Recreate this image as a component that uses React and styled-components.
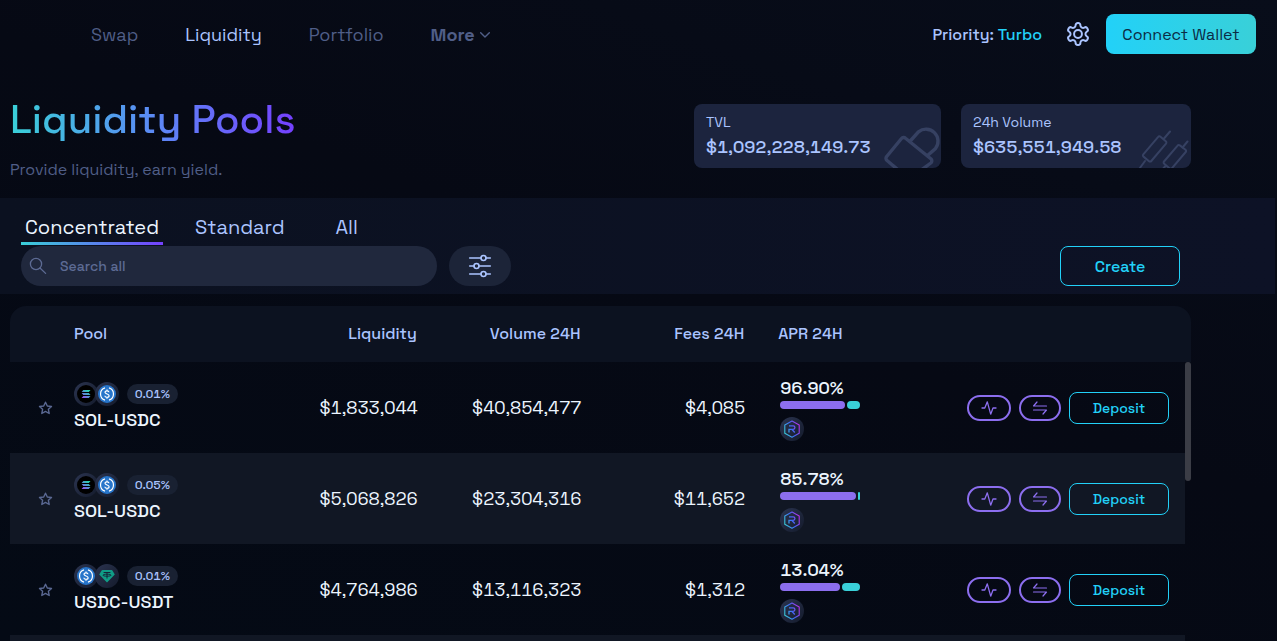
import React, { useState } from 'react';
import styled, { createGlobalStyle } from 'styled-components';

const GlobalStyle = createGlobalStyle`
  * {
    box-sizing: border-box;
  }
  body {
    margin: 0;
    background: #060914;
    color: #ecf5ff;
    font-family: 'Space Grotesk', Inter, 'Liberation Sans', sans-serif;
    font-variant-numeric: tabular-nums;
  }
  button,
  input {
    font-family: inherit;
    font-weight: inherit;
  }
`;

const Page = styled.div`
  height: 100vh;
  display: flex;
  flex-direction: column;
  overflow: hidden;
  background: linear-gradient(200deg, #080d1a 0%, #060914 45%, #040a15 100%);
`;

const Header = styled.header`
  display: flex;
  align-items: center;
  justify-content: space-between;
  height: 68px;
  flex-shrink: 0;
  padding: 0 21px 0 91px;
`;

const Nav = styled.nav`
  display: flex;
  align-items: center;
  gap: 47px;
  padding-top: 2px;
`;

const NavLink = styled.a`
  color: ${(props) => (props.$active ? '#abc4ff' : '#505e87')};
  font-size: 18px;
  line-height: 24px;
  text-decoration: none;
`;

const MoreButton = styled.button`
  display: flex;
  align-items: center;
  gap: 5px;
  padding: 0;
  border: 0;
  background: none;
  color: #505e87;
  font-size: 18px;
  font-weight: 600;
  line-height: 24px;
`;

const HeaderRight = styled.div`
  display: flex;
  align-items: center;
`;

const Priority = styled.span`
  color: #abc4ff;
  font-size: 16px;
  font-weight: 500;
  margin-right: 24px;

  em {
    color: #22d1f8;
    font-style: normal;
  }
`;

const IconButton = styled.button`
  display: flex;
  padding: 0;
  border: 0;
  background: none;
  color: #abc4ff;
  margin-right: 16px;
`;

const ConnectButton = styled.button`
  width: 150px;
  height: 40px;
  border: 0;
  border-radius: 8px;
  background: linear-gradient(90deg, #22d1f8, #39d0d8);
  color: #0b2b44;
  font-size: 16px;
`;

const Hero = styled.section`
  display: flex;
  justify-content: space-between;
  align-items: flex-start;
  height: 130px;
  flex-shrink: 0;
  padding: 28px 86px 0 10px;
`;

const Title = styled.h1`
  width: fit-content;
  margin: 0 0 14px;
  background: linear-gradient(90deg, #39d0d8, #5b8af5 50%, #7540ff);
  background-clip: text;
  color: transparent;
  font-size: 40px;
  font-weight: 500;
  line-height: 48px;
`;

const Subtitle = styled.p`
  margin: 0;
  color: #505e87;
  font-size: 16px;
  line-height: 24px;
`;

const Stats = styled.div`
  display: flex;
  gap: 20px;
  padding-top: 8px;
`;

const StatCard = styled.div`
  position: relative;
  width: ${(props) => props.$width};
  height: 64px;
  padding: 8px 12px;
  border-radius: 8px;
  background: #1c243e;
  overflow: hidden;
  color: #abc4ff;

  svg {
    position: absolute;
    right: 0;
    bottom: 0;
    color: #364162;
  }
`;

const StatLabel = styled.div`
  font-size: 14px;
  line-height: 20px;
`;

const StatValue = styled.div`
  font-size: 18px;
  font-weight: 500;
  line-height: 30px;
`;

const Toolbar = styled.section`
  flex-shrink: 0;
  margin-right: 2px;
  padding: 13px 95px 8px 21px;
  background: linear-gradient(90deg, #0b1120, #0d1226);
`;

const Tabs = styled.div`
  display: flex;
  gap: 28px;
`;

const Tab = styled.button`
  min-width: 60px;
  padding: 2px 4px 0;
  border: 0;
  border-bottom: 3px solid;
  border-image: ${(props) =>
      props.$active
        ? 'linear-gradient(90deg, #39d0d8, #7540ff)'
        : 'linear-gradient(transparent, transparent)'}
    1;
  background: none;
  color: ${(props) => (props.$active ? '#ecf5ff' : '#abc4ff')};
  font-size: 20px;
  line-height: 29px;
`;

const ToolRow = styled.div`
  display: flex;
  align-items: center;
  gap: 12px;
  padding-top: 1px;
`;

const SearchBox = styled.label`
  display: flex;
  align-items: center;
  gap: 11px;
  width: 416px;
  height: 40px;
  padding: 0 8px;
  border-radius: 20px;
  background: #20283d;
  color: #5d6b94;

  input {
    flex: 1;
    border: 0;
    outline: 0;
    background: none;
    color: #abc4ff;
    font-size: 14px;
    font-weight: 500;
  }
  input::placeholder {
    color: #5d6b94;
    opacity: 1;
  }
`;

const FilterButton = styled.button`
  display: flex;
  align-items: center;
  justify-content: center;
  width: 62px;
  height: 40px;
  padding: 0;
  border: 0;
  border-radius: 20px;
  background: #1c2438;
  color: #abc4ff;
`;

const OutlineButton = styled.button`
  width: ${(props) => (props.$large ? 120 : 100)}px;
  height: ${(props) => (props.$large ? 40 : 32)}px;
  margin-left: ${(props) => (props.$large ? 'auto' : 0)};
  padding: 0;
  border: 1px solid #22d1f8;
  border-radius: 8px;
  background: none;
  color: #22d1f8;
  font-size: ${(props) => (props.$large ? 16 : 14)}px;
  font-weight: 500;
`;

const TableWrap = styled.div`
  position: relative;
  flex: 1;
  min-height: 0;
  margin: 12px 86px 0 10px;
  border-radius: 16px 16px 0 0;
  overflow: hidden;
`;

const Table = styled.table`
  display: flex;
  flex-direction: column;
  height: 100%;
`;

const Thead = styled.thead`
  display: block;
  padding-right: 6px;
  background: #0c1220;
`;

const Tbody = styled.tbody`
  display: block;
  flex: 1;
  min-height: 0;
  margin-right: 6px;
  overflow-y: auto;
  scrollbar-width: none;
`;

const Row = styled.tr`
  display: grid;
  grid-template-columns: 64px 11fr 10fr 10fr 10fr 13fr 227px;
  align-items: center;
  height: ${(props) => (props.$head ? 56 : 91)}px;
  background: ${(props) => (props.$striped ? '#111724' : 'transparent')};
`;

const Th = styled.th`
  padding: 0 1px 2px ${(props) => (props.$inset ? 33 : 0)}px;
  color: #abc4ff;
  font-size: 16px;
  font-weight: 500;
  text-align: ${(props) => (props.$right ? 'right' : 'left')};
`;

const Td = styled.td`
  padding: 0 0 0 ${(props) => (props.$inset ? 35 : 0)}px;
  font-size: 18px;
  line-height: 24px;
  text-align: ${(props) => (props.$right ? 'right' : 'left')};
`;

const StarButton = styled.button`
  display: flex;
  margin-left: 28px;
  padding: 0;
  border: 0;
  background: none;
  color: ${(props) => (props.$on ? '#abc4ff' : '#5a6892')};
`;

const PoolInfo = styled.div`
  padding-bottom: 2px;
`;

const PoolTop = styled.div`
  display: flex;
  align-items: center;
  height: 24px;
`;

const TokenBadge = styled.span`
  display: flex;
  align-items: center;
  justify-content: center;
  width: 24px;
  height: 24px;
  border-radius: 50%;
  background: linear-gradient(130deg, #2b3450, #141b2c);

  & + & {
    margin-left: -3px;
  }
`;

const FeeTag = styled.span`
  margin-left: 8px;
  padding: 0 8px;
  border-radius: 10px;
  background: #192132;
  color: #abc4ff;
  font-size: 12px;
  font-weight: 500;
  line-height: 20px;
`;

const PoolName = styled.div`
  margin-top: 2px;
  font-weight: 500;
`;

const Apr = styled.div`
  padding-top: 2px;
`;

const AprValue = styled.div`
  font-weight: 500;
`;

const AprBar = styled.div`
  display: flex;
  gap: 2px;
  width: 80px;
  height: 8px;
  margin: 1px 0 8px;
`;

const AprPart = styled.span`
  border-radius: 4px;
  background: ${(props) => props.$color};
`;

const Actions = styled.div`
  display: flex;
  align-items: center;
  justify-content: flex-end;
  gap: 8px;
  padding-right: 16px;
`;

const PillButton = styled.button`
  display: flex;
  align-items: center;
  justify-content: center;
  width: ${(props) => props.$width}px;
  height: 26px;
  padding: 0;
  border: 2px solid #8c6eef;
  border-radius: 13px;
  background: none;
  color: #8c6eef;
`;

const ScrollThumb = styled.div`
  position: absolute;
  top: 56px;
  right: 0;
  width: 6px;
  height: 119px;
  border-radius: 3px;
  background: #3b3d46;
`;

const ChevronIcon = () => (
  <svg width="10" height="6" viewBox="0 0 10 6" fill="none" stroke="currentColor" strokeWidth="1.4">
    <path d="M0.7 0.7 5 5 9.3 0.7" strokeLinecap="round" strokeLinejoin="round" />
  </svg>
);

const GearIcon = () => (
  <svg width="24" height="24" viewBox="1 1 22 22" fill="none" stroke="currentColor" strokeWidth="1.8">
    <path
      d="M12.22 2h-.44a2 2 0 0 0-2 2v.18a2 2 0 0 1-1 1.73l-.43.25a2 2 0 0 1-2 0l-.15-.08a2 2 0 0 0-2.73.73l-.22.38a2 2 0 0 0 .73 2.73l.15.1a2 2 0 0 1 1 1.72v.51a2 2 0 0 1-1 1.74l-.15.09a2 2 0 0 0-.73 2.73l.22.38a2 2 0 0 0 2.73.73l.15-.08a2 2 0 0 1 2 0l.43.25a2 2 0 0 1 1 1.73V20a2 2 0 0 0 2 2h.44a2 2 0 0 0 2-2v-.18a2 2 0 0 1 1-1.73l.43-.25a2 2 0 0 1 2 0l.15.08a2 2 0 0 0 2.73-.73l.22-.39a2 2 0 0 0-.73-2.73l-.15-.08a2 2 0 0 1-1-1.74v-.5a2 2 0 0 1 1-1.74l.15-.09a2 2 0 0 0 .73-2.73l-.22-.38a2 2 0 0 0-2.73-.73l-.15.08a2 2 0 0 1-2 0l-.43-.25a2 2 0 0 1-1-1.73V4a2 2 0 0 0-2-2z"
      strokeLinejoin="round"
    />
    <circle cx="12" cy="12" r="3.6" />
  </svg>
);

const LockIcon = () => (
  <svg width="58" height="44" viewBox="0 0 58 44" fill="none" stroke="currentColor" strokeWidth="3.4">
    <path
      d="M18.500 14.500 3.700 32.500a2.800 2.800 0 0 0 .3 4L26 55 47.800 39a2.800 2.800 0 0 0 .3-4L22.500 14.200a2.800 2.800 0 0 0-4 .3z"
      strokeLinejoin="round"
    />
    <path d="M26.800 17.500 35.500 7.800A12 12 0 0 1 52.500 24.500L44 32" />
  </svg>
);

const CandlesIcon = () => (
  <svg width="53" height="40" viewBox="1 0 53 40" fill="none" stroke="currentColor" strokeWidth="2" strokeLinecap="round">
    <path d="M33 3.500 27 10.500M8 33 2.500 40.500M50.500 13.500 45.500 19.500M28.500 38 23 44" />
    <path
      d="M21.200 8.900 6.300 26.300a1.600 1.600 0 0 0 .2 2.300l5.500 4.600a1.600 1.600 0 0 0 2.300-.2L29 15.600a1.600 1.600 0 0 0-.2-2.300l-5.300-4.600a1.600 1.600 0 0 0-2.300.2z"
      strokeLinejoin="round"
    />
    <path
      d="M40.600 17.600 27 33.500a1.600 1.600 0 0 0 .2 2.300l5.500 4.600a1.600 1.600 0 0 0 2.300-.2L48.700 24a1.600 1.600 0 0 0-.2-2.300l-5.600-4.300a1.600 1.600 0 0 0-2.300.2z"
      strokeLinejoin="round"
    />
  </svg>
);

const SearchIcon = () => (
  <svg width="18" height="18" viewBox="0 0 18 18" fill="none" stroke="currentColor" strokeWidth="1.3" strokeLinecap="round">
    <circle cx="7" cy="7" r="5.6" />
    <path d="m11 11 5.6 5.4" />
  </svg>
);

const FilterIcon = () => (
  <svg width="24" height="24" viewBox="0 0 24 24" fill="none" stroke="currentColor" strokeWidth="1.6" strokeLinecap="round">
    <path d="M1.7 4H13M18 4h4.300M1.700 12H6M11 12h11.300M1.700 20H13M18 20h4.300" />
    <circle cx="15.5" cy="4" r="2.5" />
    <circle cx="8.5" cy="12" r="2.5" />
    <circle cx="15.5" cy="20" r="2.5" />
  </svg>
);

const StarIcon = () => (
  <svg width="15" height="14" viewBox="0 0 15 14" fill="none" stroke="currentColor" strokeWidth="1.4">
    <path
      d="m7.500 1.200 1.800 3.800 4.200.5-3.100 2.800.8 4.200-3.700-2.100-3.700 2.100.8-4.200L1.500 5.500 5.700 5z"
      strokeLinejoin="round"
    />
  </svg>
);

const PulseIcon = () => (
  <svg width="16" height="16" viewBox="0 0 16 16" fill="none" stroke="currentColor" strokeWidth="1.3">
    <path d="M1 8h2.800L6.300 1.800 9.700 14.200 12 8h3" strokeLinecap="round" strokeLinejoin="round" />
  </svg>
);

const SwapIcon = () => (
  <svg width="16" height="16" viewBox="0 0 16 16" fill="none" stroke="currentColor" strokeWidth="1.2">
    <path d="M14.500 6H1.500L5 2M1.500 10H14.500L11 14" strokeLinecap="round" strokeLinejoin="round" />
  </svg>
);

const SolIcon = () => (
  <svg width="18" height="18" viewBox="0 0 18 18">
    <defs>
      <linearGradient id="sol" x1="13" y1="4" x2="5" y2="14" gradientUnits="userSpaceOnUse">
        <stop offset="0" stopColor="#19f0a0" />
        <stop offset="0.5" stopColor="#4f96cf" />
        <stop offset="1" stopColor="#a83df5" />
      </linearGradient>
    </defs>
    <circle cx="9" cy="9" r="9" fill="#000" />
    <path
      d="M6.300 4.900h7.200l-1.700 2.200H4.600zM4.600 7.900h7.200l1.700 2.200H6.300zM6.300 10.900h7.200l-1.700 2.200H4.600z"
      fill="url(#sol)"
    />
  </svg>
);

const UsdcIcon = () => (
  <svg width="18" height="18" viewBox="0 0 18 18" fill="none" stroke="#fff" strokeWidth="1.200">
    <circle cx="9" cy="9" r="9" fill="#2775ca" stroke="none" />
    <path d="M7 2.900a6.400 6.400 0 0 0 0 12.200M11 2.900a6.400 6.400 0 0 1 0 12.200" />
    <path d="M11 7.200C10.900 6.200 10.100 5.800 9 5.800c-1.200 0-2 .5-2 1.500 0 2.200 4.100 1.100 4.100 3.400 0 1-.9 1.600-2.100 1.600s-2.100-.5-2.200-1.600M9 4.400v1.400M9 12.300v1.400" />
  </svg>
);

const UsdtIcon = () => (
  <svg width="18" height="18" viewBox="0 0 18 18">
    <path d="M4.400 3h9.200a1 1 0 0 1 .8.500L16.800 7.500 9 15.500 1.200 7.500l2.400-4a1 1 0 0 1 .8-.5z" fill="#109d86" />
    <path
      d="M5.600 5.500h6.800M9 5.500v6M9 9.200c-2.300 0-4-.4-4-1s1.700-1 4-1 4 .4 4 1-1.700 1-4 1z"
      fill="none"
      stroke="#15253a"
      strokeWidth="1"
    />
  </svg>
);

const RayIcon = () => (
  <svg width="18" height="18" viewBox="0 0 18 18" fill="none" stroke="url(#ray)" strokeWidth="1.100">
    <defs>
      <linearGradient id="ray" x1="1" y1="12" x2="17" y2="6" gradientUnits="userSpaceOnUse">
        <stop offset="0" stopColor="#39d0d8" />
        <stop offset="0.500" stopColor="#3f68f5" />
        <stop offset="1" stopColor="#c22ee8" />
      </linearGradient>
    </defs>
    <path d="M9 1 16.200 5v8.200L9 17.200 1.800 13.200V5z" strokeLinejoin="round" />
    <path d="M6 12.500V9.300h4.200a1.700 1.700 0 0 0 0-3.400H6M9 9.500l2.800 3" strokeWidth="1.300" />
  </svg>
);

const tokenIcons = { SOL: SolIcon, USDC: UsdcIcon, USDT: UsdtIcon };

const pools = [
  {
    id: 1,
    tokens: ['SOL', 'USDC'],
    fee: '0.01%',
    liquidity: '$1,833,044',
    volume: '$40,854,477',
    fees: '$4,085',
    apr: '96.90%',
    parts: [65, 13],
  },
  {
    id: 2,
    tokens: ['SOL', 'USDC'],
    fee: '0.05%',
    liquidity: '$5,068,826',
    volume: '$23,304,316',
    fees: '$11,652',
    apr: '85.78%',
    parts: [76, 2],
  },
  {
    id: 3,
    tokens: ['USDC', 'USDT'],
    fee: '0.01%',
    liquidity: '$4,764,986',
    volume: '$13,116,323',
    fees: '$1,312',
    apr: '13.04%',
    parts: [60, 18],
  },
];

const PoolRow = ({ pool, striped }) => {
  const [isFavorite, setIsFavorite] = useState(false);

  return (
    <Row $striped={striped}>
      <Td>
        <StarButton
          aria-label="Favorite"
          $on={isFavorite}
          onClick={() => setIsFavorite(!isFavorite)}
        >
          <StarIcon />
        </StarButton>
      </Td>
      <Td>
        <PoolInfo>
          <PoolTop>
            {pool.tokens.map((token) => {
              const Icon = tokenIcons[token];
              return (
                <TokenBadge key={token}>
                  <Icon />
                </TokenBadge>
              );
            })}
            <FeeTag>{pool.fee}</FeeTag>
          </PoolTop>
          <PoolName>{pool.tokens.join('-')}</PoolName>
        </PoolInfo>
      </Td>
      <Td $right>{pool.liquidity}</Td>
      <Td $right>{pool.volume}</Td>
      <Td $right>{pool.fees}</Td>
      <Td $inset>
        <Apr>
          <AprValue>{pool.apr}</AprValue>
          <AprBar>
            <AprPart $color="#8c6eef" style={{ width: pool.parts[0] }} />
            <AprPart $color="#39d0d8" style={{ width: pool.parts[1] }} />
          </AprBar>
          <TokenBadge>
            <RayIcon />
          </TokenBadge>
        </Apr>
      </Td>
      <Td>
        <Actions>
          <PillButton $width={44} aria-label="Chart">
            <PulseIcon />
          </PillButton>
          <PillButton $width={42} aria-label="Swap">
            <SwapIcon />
          </PillButton>
          <OutlineButton>Deposit</OutlineButton>
        </Actions>
      </Td>
    </Row>
  );
};

const App = () => {
  const [tab, setTab] = useState('Concentrated');
  const [search, setSearch] = useState('');

  const visiblePools = pools.filter((pool) =>
    pool.tokens.join('-').toLowerCase().includes(search.toLowerCase())
  );

  return (
    <>
      <GlobalStyle />
      <Page>
        <Header>
          <Nav>
            <NavLink href="#swap">Swap</NavLink>
            <NavLink href="#liquidity" $active>
              Liquidity
            </NavLink>
            <NavLink href="#portfolio">Portfolio</NavLink>
            <MoreButton>
              More <ChevronIcon />
            </MoreButton>
          </Nav>
          <HeaderRight>
            <Priority>
              Priority: <em>Turbo</em>
            </Priority>
            <IconButton aria-label="Settings">
              <GearIcon />
            </IconButton>
            <ConnectButton>Connect Wallet</ConnectButton>
          </HeaderRight>
        </Header>

        <Hero>
          <div>
            <Title>Liquidity Pools</Title>
            <Subtitle>Provide liquidity, earn yield.</Subtitle>
          </div>
          <Stats>
            <StatCard $width="247px">
              <StatLabel>TVL</StatLabel>
              <StatValue>$1,092,228,149.73</StatValue>
              <LockIcon />
            </StatCard>
            <StatCard $width="230px">
              <StatLabel>24h Volume</StatLabel>
              <StatValue>$635,551,949.58</StatValue>
              <CandlesIcon />
            </StatCard>
          </Stats>
        </Hero>

        <Toolbar>
          <Tabs>
            {['Concentrated', 'Standard', 'All'].map((name) => (
              <Tab key={name} $active={tab === name} onClick={() => setTab(name)}>
                {name}
              </Tab>
            ))}
          </Tabs>
          <ToolRow>
            <SearchBox>
              <SearchIcon />
              <input
                type="text"
                aria-label="Search all"
                placeholder="Search all"
                value={search}
                onChange={(e) => setSearch(e.target.value)}
              />
            </SearchBox>
            <FilterButton aria-label="Filters">
              <FilterIcon />
            </FilterButton>
            <OutlineButton $large>Create</OutlineButton>
          </ToolRow>
        </Toolbar>

        <TableWrap>
          <Table>
            <Thead>
              <Row $head>
                <Th />
                <Th>Pool</Th>
                <Th $right>Liquidity</Th>
                <Th $right>Volume 24H</Th>
                <Th $right>Fees 24H</Th>
                <Th $inset>APR 24H</Th>
                <Th />
              </Row>
            </Thead>
            <Tbody>
              {visiblePools.map((pool, index) => (
                <PoolRow key={pool.id} pool={pool} striped={index % 2 === 1} />
              ))}
              <Row $striped={visiblePools.length % 2 === 1} aria-hidden="true" />
            </Tbody>
          </Table>
          <ScrollThumb />
        </TableWrap>
      </Page>
    </>
  );
};

export default App;
